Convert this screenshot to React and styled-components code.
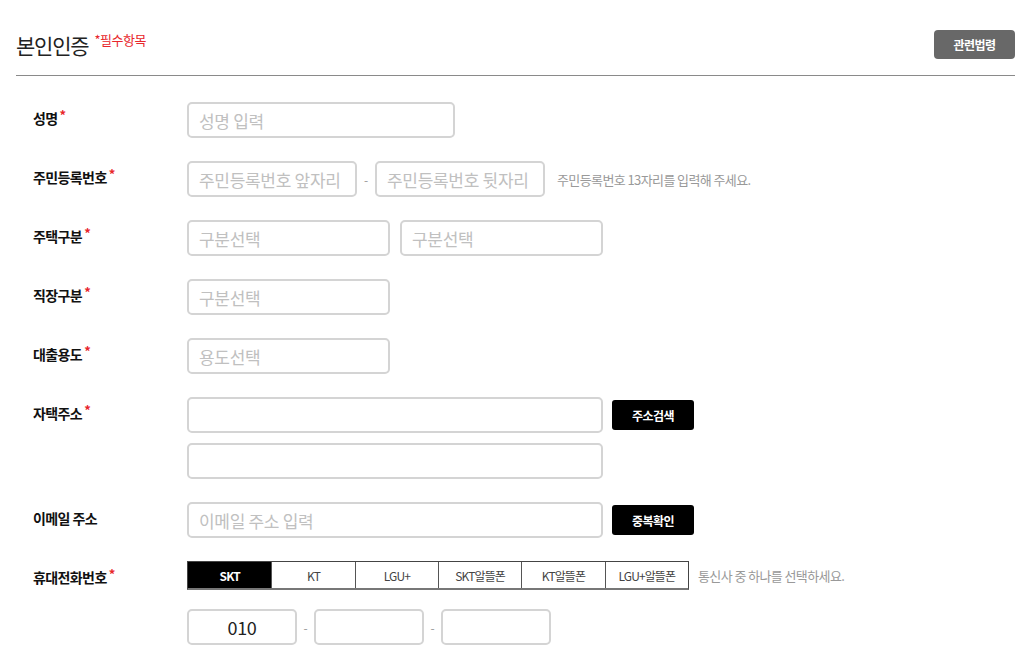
import React from "react";
import styled, { createGlobalStyle } from "styled-components";

const Global = createGlobalStyle`
  body {
    margin: 0;
    background: #fff;
    font-family: "Noto Sans CJK KR", "Noto Sans", sans-serif;
    color: #222;
  }
`;

const Page = styled.div`
  width: 1024px;
  padding: 0 9px 0 16px;
  box-sizing: border-box;
`;

const Header = styled.div`
  display: flex;
  justify-content: space-between;
  align-items: center;
  padding: 29px 0 16px;
  border-bottom: 1px solid #8a8a8a;
`;

const Title = styled.h2`
  margin: 0;
  font-size: 21px;
  font-weight: 400;
  letter-spacing: -1.2px;
  color: #222;
  display: flex;
  align-items: flex-start;
  line-height: 28px;
  margin-top: 2px;
`;

const Required = styled.span`
  font-size: 13px;
  color: #e8262b;
  margin-left: 6px;
  line-height: 18px;
  letter-spacing: -0.5px;
`;

const GreyButton = styled.button`
  width: 81px;
  height: 29px;
  border: none;
  border-radius: 4px;
  background: #686868;
  color: #fff;
  font-family: inherit;
  font-size: 12px;
  font-weight: 700;
  letter-spacing: -0.5px;
`;

const Form = styled.div`
  padding-top: 26px;
  display: flex;
  flex-direction: column;
  gap: 23px;
`;

const Row = styled.div`
  display: flex;
  align-items: flex-start;
`;

const Label = styled.div`
  width: 171px;
  padding: 6px 0 0 17px;
  box-sizing: border-box;
  font-size: 14px;
  font-weight: 700;
  letter-spacing: -0.6px;
  line-height: 20px;
  color: #111;
  flex-shrink: 0;
`;

const Star = styled.span`
  color: #e8262b;
  font-size: 13px;
  margin-left: 2px;
  vertical-align: top;
  position: relative;
  top: -3px;
`;

const Field = styled.div`
  display: flex;
  flex-direction: column;
  gap: ${(p) => p.$gap ?? 10}px;
`;

const Line = styled.div`
  display: flex;
  align-items: center;
  gap: ${(p) => p.$gap ?? 9}px;
`;

const Input = styled.input`
  width: ${(p) => p.$w}px;
  height: 36px;
  margin: 0;
  box-sizing: border-box;
  border: 2px solid #d4d4d4;
  border-radius: 5px;
  padding: 0 10px;
  font-family: inherit;
  font-size: ${(p) => (p.$center ? 18 : 17)}px;
  text-align: ${(p) => (p.$center ? "center" : "left")};
  color: #222;
  letter-spacing: -0.3px;
  outline: none;
  &::placeholder {
    color: #c0c0c0;
  }
`;

const Dash = styled.span`
  color: #999;
  font-size: 12px;
  width: ${(p) => p.$w || 8}px;
  text-align: center;
`;

const Help = styled.span`
  font-size: 13px;
  color: #999;
  letter-spacing: -0.6px;
  margin-left: ${(p) => p.$ml ?? 0}px;
`;

const BlackButton = styled.button`
  width: 82px;
  height: 30px;
  border: none;
  border-radius: 3px;
  background: #000;
  color: #fff;
  font-family: inherit;
  font-size: 12px;
  font-weight: 700;
  letter-spacing: -0.5px;
`;

const Tabs = styled.div`
  display: grid;
  grid-template-columns: repeat(6, 1fr);
  width: 502px;
  height: 29px;
  box-sizing: border-box;
  border: 1px solid #444;
  border-bottom: 2px solid #777;
`;

const Tab = styled.div`
  display: flex;
  align-items: center;
  justify-content: center;
  font-size: 12px;
  letter-spacing: -0.9px;
  background: ${(p) => (p.$active ? "#000" : "#fff")};
  color: ${(p) => (p.$active ? "#fff" : "#444")};
  font-weight: ${(p) => (p.$active ? 700 : 400)};
  border-left: ${(p) => (p.$first ? "none" : "1px solid #555")};
`;

const carriers = ["SKT", "KT", "LGU+", "SKT알뜰폰", "KT알뜰폰", "LGU+알뜰폰"];

function FormRow({ label, required, children }) {
  return (
    <Row>
      <Label>
        {label}
        {required && <Star>*</Star>}
      </Label>
      {children}
    </Row>
  );
}

export default function App() {
  return (
    <Page>
      <Global />
      <Header>
        <Title>
          본인인증
          <Required>*필수항목</Required>
        </Title>
        <GreyButton>관련법령</GreyButton>
      </Header>
      <Form>
        <FormRow label="성명" required>
          <Input $w={268} placeholder="성명 입력" />
        </FormRow>
        <FormRow label="주민등록번호" required>
          <Line $gap={0}>
            <Input $w={170} placeholder="주민등록번호 앞자리" />
            <Dash $w={18}>-</Dash>
            <Input $w={170} placeholder="주민등록번호 뒷자리" />
            <Help $ml={12}>주민등록번호 13자리를 입력해 주세요.</Help>
          </Line>
        </FormRow>
        <FormRow label="주택구분" required>
          <Line $gap={10}>
            <Input $w={203} placeholder="구분선택" />
            <Input $w={203} placeholder="구분선택" />
          </Line>
        </FormRow>
        <FormRow label="직장구분" required>
          <Input $w={203} placeholder="구분선택" />
        </FormRow>
        <FormRow label="대출용도" required>
          <Input $w={203} placeholder="용도선택" />
        </FormRow>
        <FormRow label="자택주소" required>
          <Field>
            <Line>
              <Input $w={416} />
              <BlackButton>주소검색</BlackButton>
            </Line>
            <Input $w={416} />
          </Field>
        </FormRow>
        <FormRow label="이메일 주소">
          <Line>
            <Input $w={416} placeholder="이메일 주소 입력" />
            <BlackButton>중복확인</BlackButton>
          </Line>
        </FormRow>
        <FormRow label="휴대전화번호" required>
          <Field $gap={19}>
            <Line>
              <Tabs>
                {carriers.map((c, i) => (
                  <Tab key={c} $active={i === 0} $first={i === 0}>
                    {c}
                  </Tab>
                ))}
              </Tabs>
              <Help>통신사 중 하나를 선택하세요.</Help>
            </Line>
            <Line $gap={0}>
              <Input $w={110} $center defaultValue="010" />
              <Dash $w={17}>-</Dash>
              <Input $w={110} $center />
              <Dash $w={17}>-</Dash>
              <Input $w={110} $center />
            </Line>
          </Field>
        </FormRow>
      </Form>
    </Page>
  );
}
